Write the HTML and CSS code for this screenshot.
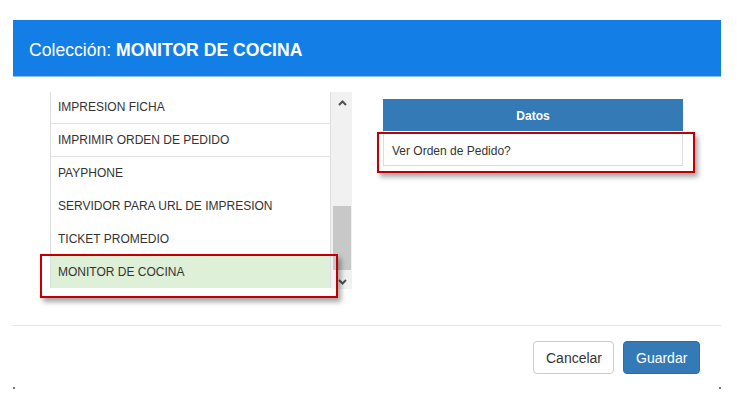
FILE: index.html
```html
<!DOCTYPE html>
<html lang="es">
<head>
<meta charset="utf-8">
<title>Colección</title>
<link rel="stylesheet" href="styles.css">
</head>
<body>
<div class="modal">
  <div class="modal-header">
    <h1 class="modal-title">Colección: <b>MONITOR DE COCINA</b></h1>
  </div>
  <div class="modal-body">
    <div class="list-wrap">
      <div class="list">
        <div class="list-inner">
          <div class="row line">IMPRESION FICHA</div>
          <div class="row line">IMPRIMIR ORDEN DE PEDIDO</div>
          <div class="row">PAYPHONE</div>
          <div class="row">SERVIDOR PARA URL DE IMPRESION</div>
          <div class="row">TICKET PROMEDIO</div>
          <div class="row selected">MONITOR DE COCINA</div>
        </div>
      </div>
      <div class="scrollbar">
        <span class="arrow up"><svg width="9" height="6" viewBox="0 0 9 6"><path d="M1 5 L4.5 1.5 L8 5" fill="none" stroke="#505050" stroke-width="2"/></svg></span>
        <span class="thumb"></span>
        <span class="arrow down"><svg width="9" height="6" viewBox="0 0 9 6"><path d="M1 1 L4.5 4.5 L8 1" fill="none" stroke="#505050" stroke-width="2"/></svg></span>
      </div>
      <div class="mark mark-list"></div>
    </div>
    <div class="panel">
      <div class="panel-head">Datos</div>
      <div class="panel-row">Ver Orden de Pedido?</div>
      <div class="mark mark-panel"></div>
    </div>
  </div>
  <div class="modal-footer">
    <button class="btn btn-default">Cancelar</button>
    <button class="btn btn-primary">Guardar</button>
  </div>
</div>
</body>
</html>
```

FILE: styles.css
```css
html, body {
  margin: 0;
  padding: 0;
  background: #ffffff;
  font-family: "Liberation Sans", Arial, sans-serif;
  color: #333333;
}

.modal {
  margin: 20px 0 0 13px;
  width: 708px;
  position: relative;
}

.modal-header {
  height: 53px;
  padding-top: 3px;
  background: #137fe6;
  border-bottom: 1px solid #8dc0f0;
  display: flex;
  align-items: center;
  padding-left: 16px;
}

.modal-title {
  margin: 0;
  font-size: 17.6px;
  font-weight: normal;
  color: #ffffff;
  line-height: 20px;
}

.modal-title b {
  font-weight: bold;
}

.modal-body {
  height: 233px;
  padding: 15px 0 0 37px;
  display: flex;
  align-items: flex-start;
}

.list-wrap {
  position: relative;
  display: flex;
  height: 196px;
}

.list {
  width: 279px;
  height: 196px;
  border-left: 1px solid #dddddd;
  border-right: 1px solid #dddddd;
  overflow: hidden;
}

.list-inner {
  margin-top: -1px;
}

.row {
  height: 32px;
  line-height: 32px;
  border-bottom: 1px solid transparent;
  padding-left: 7px;
  font-size: 12px;
  color: #333333;
  white-space: nowrap;
}

.row.line {
  border-bottom-color: #e3e3e3;
}

.row.selected {
  background: #dff0d8;
}

.scrollbar {
  width: 21px;
  height: 197px;
  background: #f1f1f1;
  position: relative;
  display: flex;
  flex-direction: column;
  align-items: center;
}

.arrow {
  display: flex;
  justify-content: center;
  height: 10px;
}

.arrow.up {
  margin-top: 8px;
  margin-left: 1px;
}

.thumb {
  width: 18px;
  height: 66px;
  background: #c8c8c8;
  margin-top: 96px;
}

.arrow.down {
  margin-top: 9px;
  margin-left: 2px;
}

.mark {
  position: absolute;
  border: 2px solid #c00000;
  box-sizing: border-box;
  box-shadow: 3px 4px 5px rgba(0, 0, 0, 0.35);
}

.mark-list {
  left: -10px;
  top: 162px;
  width: 298px;
  height: 44px;
}

.panel {
  position: relative;
  width: 300px;
  margin: 7px 0 0 31px;
}

.panel-head {
  height: 32px;
  line-height: 34px;
  background: #337ab7;
  color: #ffffff;
  font-size: 12px;
  font-weight: bold;
  text-align: center;
}

.panel-row {
  height: 22px;
  padding-top: 12px;
  line-height: 16px;
  border: 1px solid #dddddd;
  border-top: none;
  padding-left: 8px;
  font-size: 12px;
  color: #333333;
}

.mark-panel {
  left: -6px;
  top: 33px;
  width: 318px;
  height: 41px;
}

.modal-footer {
  border-top: 1px solid #e5e5e5;
  padding: 15px 21px 15px 0;
  display: flex;
  justify-content: flex-end;
  gap: 9px;
  position: relative;
}

.modal-footer::before,
.modal-footer::after {
  content: "";
  position: absolute;
  bottom: 0;
  width: 2px;
  height: 2px;
  background: #777777;
}

.modal-footer::before { left: 0; }
.modal-footer::after { right: 0; }

.btn {
  height: 33px;
  padding: 0 12px;
  font-family: "Liberation Sans", Arial, sans-serif;
  font-size: 14px;
  border-radius: 4px;
  border: 1px solid #cccccc;
  cursor: pointer;
}

.btn-default {
  width: 81px;
  background: #ffffff;
  color: #333333;
}

.btn-primary {
  width: 77px;
  background: #337ab7;
  border-color: #2e6da4;
  color: #ffffff;
}
```
